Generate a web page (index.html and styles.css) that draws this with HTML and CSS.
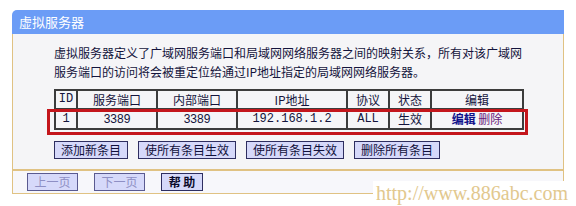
FILE: index.html
```html
<!DOCTYPE html>
<html lang="zh-CN">
<head>
<meta charset="utf-8">
<title>虚拟服务器</title>
<link rel="stylesheet" href="styles.css">
</head>
<body>
<div class="panel">
  <div class="title">虚拟服务器</div>
  <div class="body">
    <p class="intro">虚拟服务器定义了广域网服务端口和局域网网络服务器之间的映射关系，所有对该广域网<br>服务端口的访问将会被重定位给通过IP地址指定的局域网网络服务器。</p>
    <table class="rules">
      <colgroup>
        <col class="c-id"><col class="c-port"><col class="c-port"><col class="c-ip"><col class="c-proto"><col class="c-state"><col class="c-edit">
      </colgroup>
      <tr class="head">
        <th class="mono">ID</th><th>服务端口</th><th>内部端口</th><th>IP地址</th><th>协议</th><th>状态</th><th>编辑</th>
      </tr>
      <tr class="row">
        <td class="mono">1</td><td class="num">3389</td><td class="num">3389</td><td class="mono">192.168.1.2</td><td class="mono">ALL</td><td>生效</td><td><a class="lnk">编辑</a> <a class="lnk visited">删除</a></td>
      </tr>
    </table>
    <div class="actions">
      <button class="btn">添加新条目</button>
      <button class="btn">使所有条目生效</button>
      <button class="btn">使所有条目失效</button>
      <button class="btn">删除所有条目</button>
    </div>
    <div class="footer">
      <button class="btn btn-page" disabled>上一页</button>
      <button class="btn btn-page" disabled>下一页</button>
      <button class="btn btn-help">帮 助</button>
    </div>
  </div>
  <div class="highlight"></div>
</div>
<div class="watermark">http://www.886abc.com</div>
</body>
</html>
```

FILE: styles.css
```css
html, body {
  margin: 0;
  padding: 0;
  background: #ffffff;
}

body {
  position: relative;
  width: 576px;
  height: 206px;
  overflow: hidden;
  font-family: "Noto Sans CJK SC", "Liberation Sans", sans-serif;
  font-size: 12px;
  color: #14143c;
}

.panel {
  position: relative;
  margin: 10px 0 0 12px;
  width: 552px;
}

.title {
  height: 24px;
  line-height: 23px;
  background: #6b9cf6;
  color: #ffffff;
  font-size: 13px;
  padding-left: 7px;
  border-top-left-radius: 5px;
}

.body {
  border-left: 1px solid #e0c283;
  border-right: 1px solid #e0c283;
  border-bottom: 1px solid #e0c283;
  background: #f5f5f7;
}

.intro {
  margin: 0;
  padding: 9px 0 0 41px;
  font-size: 12px;
  line-height: 19px;
  color: #14143c;
}

.rules {
  margin: 8px 0 0 41px;
  border-collapse: collapse;
  table-layout: fixed;
  width: 470px;
  border: 2px solid #3c3c3c;
  color: #14143c;
}

.rules th,
.rules td {
  border: 2px solid #3c3c3c;
  padding: 0;
  text-align: center;
  font-weight: normal;
  font-size: 12px;
}

.head th {
  height: 17px;
  line-height: 17px;
}

.row td {
  height: 18px;
  line-height: 18px;
}

.c-id { width: 22px; }
.c-port { width: 80px; }
.c-ip { width: 110px; }
.c-proto { width: 42px; }
.c-state { width: 42px; }
.c-edit { width: 92px; }

.rules .mono {
  font-family: "Liberation Mono", "Noto Sans CJK SC", monospace;
  font-size: 12px;
}

.rules .num {
  font-family: "Liberation Sans", sans-serif;
  font-size: 12px;
}

.lnk {
  color: #10108a;
  font-weight: bold;
  font-size: 12px;
}

.lnk.visited {
  color: #6a1a7a;
  font-weight: normal;
}

.actions {
  display: flex;
  gap: 10px;
  padding: 11px 0 10px 41px;
}

.btn {
  height: 18px;
  padding: 0 6px;
  margin: 0;
  border: 1px solid #2e2e60;
  background: #d6d9fa;
  color: #10103a;
  font-family: "Noto Sans CJK SC", sans-serif;
  font-size: 12px;
  line-height: 16px;
  cursor: pointer;
}

.footer {
  display: flex;
  gap: 16px;
  padding: 2px 0 2px 14px;
  border-top: 2px solid #e0c283;
  background: #f7f7fb;
}

.btn-page {
  width: 51px;
  color: #8e8fc4;
  border-color: #5a5a90;
}

.btn-help {
  width: 42px;
  font-weight: bold;
  color: #0a0a2a;
  padding: 0;
}

.highlight {
  position: absolute;
  left: 35px;
  top: 99px;
  width: 475px;
  height: 20px;
  border: 3px solid #c4161c;
  pointer-events: none;
}

.watermark {
  position: absolute;
  left: 373px;
  top: 181px;
  width: 203px;
  height: 25px;
  background: #ffffff;
  padding-left: 3px;
  box-sizing: border-box;
  font-family: "Liberation Serif", serif;
  font-size: 20px;
  line-height: 24px;
  color: #e2c88e;
}
```
